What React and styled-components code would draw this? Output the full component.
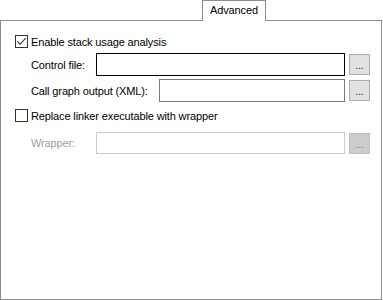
import styled, { createGlobalStyle } from 'styled-components'

const GlobalStyle = createGlobalStyle`
  html, body {
    margin: 0;
    padding: 0;
    background: #ffffff;
  }
  * {
    box-sizing: border-box;
  }
`

export default function App() {
  return (
    <>
      <GlobalStyle />
      <Dialog>
        <TabStrip>
          <Tab>Advanced</Tab>
        </TabStrip>
        <Panel>
          <CheckRow>
            <Check checked>
              <svg width="11" height="11" viewBox="0 0 11 11">
                <path d="M1.5 5.5 L4.2 8.3 L9.6 2.2" fill="none" stroke="#333" strokeWidth="1.1" />
              </svg>
            </Check>
            <Label>Enable stack usage analysis</Label>
          </CheckRow>

          <FieldRow $top={5}>
            <Label $width={65}>Control file:</Label>
            <TextBox $focused />
            <Browse>...</Browse>
          </FieldRow>

          <FieldRow $top={3}>
            <Label $width={128}>Call graph output (XML):</Label>
            <TextBox />
            <Browse>...</Browse>
          </FieldRow>

          <CheckRow $top={7}>
            <Check />
            <Label>Replace linker executable with wrapper</Label>
          </CheckRow>

          <FieldRow $top={10} $height={22}>
            <Label $width={65} $disabled>Wrapper:</Label>
            <TextBox $disabled />
            <Browse $disabled>...</Browse>
          </FieldRow>
        </Panel>
      </Dialog>
    </>
  )
}

const Dialog = styled.div`
  width: 383px;
  height: 300px;
  display: flex;
  flex-direction: column;
  font-family: 'Liberation Sans', Arial, sans-serif;
  font-size: 11px;
  letter-spacing: -0.13px;
  color: #000000;
  background: #ffffff;
`

const TabStrip = styled.div`
  height: 20px;
  display: flex;
  padding-left: 202px;
`

const Tab = styled.div`
  position: relative;
  z-index: 1;
  width: 64px;
  height: 21px;
  border: 1px solid #898c95;
  border-bottom: none;
  background: #ffffff;
  display: flex;
  justify-content: center;
  padding-top: 3px;
  color: #000000;
`

const Panel = styled.div`
  width: 382px;
  height: 280px;
  border: 1px solid #898c95;
  display: flex;
  flex-direction: column;
  padding: 14px 11px 0 14px;
`

const CheckRow = styled.div`
  display: flex;
  align-items: center;
  height: 13px;
  margin-top: ${(p) => p.$top || 0}px;
  gap: 3px;
`

const Check = styled.span`
  width: 13px;
  height: 13px;
  border: 1px solid #333333;
  background: #ffffff;
  display: flex;
  align-items: center;
  justify-content: center;
  flex: none;
`

const Label = styled.span`
  white-space: nowrap;
  color: ${(p) => (p.$disabled ? '#a0a0a0' : '#000000')};
  width: ${(p) => (p.$width ? `${p.$width}px` : 'auto')};
  flex: none;
`

const FieldRow = styled.div`
  display: flex;
  align-items: center;
  height: ${(p) => p.$height || 23}px;
  margin-top: ${(p) => p.$top || 0}px;
  margin-left: 16px;
`

const TextBox = styled.div`
  flex: 1;
  align-self: stretch;
  background: #ffffff;
  border: 1px solid
    ${(p) => (p.$focused ? '#000000' : p.$disabled ? '#cccccc' : '#7a7a7a')};
`

const Browse = styled.div`
  width: 21px;
  height: 21px;
  margin-left: 4px;
  flex: none;
  display: flex;
  align-items: center;
  justify-content: center;
  padding-top: 2px;
  font-size: 10px;
  background: ${(p) => (p.$disabled ? '#cccccc' : '#e1e1e1')};
  border: 1px solid ${(p) => (p.$disabled ? '#bfbfbf' : '#adadad')};
  color: ${(p) => (p.$disabled ? '#838383' : '#1a1a40')};
`
